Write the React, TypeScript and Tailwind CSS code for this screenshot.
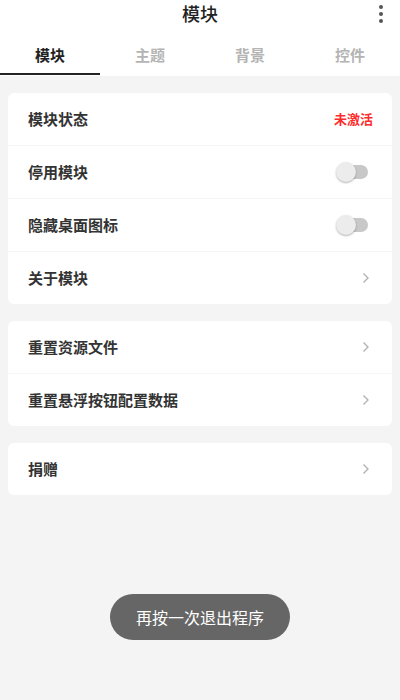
const font = { fontFamily: '"Noto Sans CJK SC", "Noto Sans", sans-serif' };

const Toggle = () => (
  <div className="relative w-[32px] h-[20px] flex items-center">
    <div className="absolute right-0 w-[24px] h-[14px] rounded-full bg-[#c8c8c8]" />
    <div className="absolute left-0 w-[20px] h-[20px] rounded-full bg-[#ececec] shadow-[0_1px_2px_rgba(0,0,0,0.3)]" />
  </div>
);

const Chevron = () => (
  <svg width="8" height="12" viewBox="0 0 8 12" fill="none" stroke="#b0b0b0" strokeWidth="1.3">
    <path d="M1.5 1.5 L6 6 L1.5 10.5" />
  </svg>
);

type Row = { label: string; right: "status" | "toggle" | "chevron" };

const Card = ({ rows }: { rows: Row[] }) => (
  <div className="mx-2 bg-white rounded-md overflow-hidden">
    {rows.map((r, i) => (
      <div
        key={r.label}
        className={`flex items-center justify-between pl-5 pr-6 ${i > 0 ? "h-[53px] border-t border-[#f6f6f6]" : "h-[52px]"}`}
      >
        <span className="text-[15px] font-semibold text-[#333]">{r.label}</span>
        {r.right === "status" && <span className="text-[13px] font-semibold text-[#ff2a2a] -mr-[5px]">未激活</span>}
        {r.right === "toggle" && <Toggle />}
        {r.right === "chevron" && <div className="-mr-[2px] flex"><Chevron /></div>}
      </div>
    ))}
  </div>
);

export default function App() {
  const tabs = ["模块", "主题", "背景", "控件"];
  return (
    <div className="w-[400px] h-[700px] bg-[#f4f4f4] relative overflow-hidden" style={font}>
      <div className="bg-white">
        <div className="h-[26px] relative flex items-center justify-center">
          <span className="text-[18px] text-[#222] font-medium">模块</span>
          <div className="absolute right-[17px] top-[5px] flex flex-col gap-[3px]">
            <div className="w-[4px] h-[4px] rounded-full bg-[#555]" />
            <div className="w-[4px] h-[4px] rounded-full bg-[#555]" />
            <div className="w-[4px] h-[4px] rounded-full bg-[#555]" />
          </div>
        </div>
        <div className="grid grid-cols-4 h-[50px]">
          {tabs.map((t, i) => (
            <div key={t} className="relative flex items-center justify-center pt-[8px]">
              <span className={`text-[15px] font-semibold ${i === 0 ? "text-[#222]" : "text-[#b4b4b4]"}`}>{t}</span>
              {i === 0 && <div className="absolute bottom-[1px] left-0 right-0 h-[2px] bg-[#222]" />}
            </div>
          ))}
        </div>
      </div>
      <div className="pt-[17px] flex flex-col gap-[17px]">
        <Card
          rows={[
            { label: "模块状态", right: "status" },
            { label: "停用模块", right: "toggle" },
            { label: "隐藏桌面图标", right: "toggle" },
            { label: "关于模块", right: "chevron" },
          ]}
        />
        <Card
          rows={[
            { label: "重置资源文件", right: "chevron" },
            { label: "重置悬浮按钮配置数据", right: "chevron" },
          ]}
        />
        <Card rows={[{ label: "捐赠", right: "chevron" }]} />
      </div>
      <div className="absolute left-1/2 -translate-x-1/2 top-[594px] h-[46px] px-[26px] rounded-full bg-[#666] flex items-center">
        <span className="text-[16px] text-white">再按一次退出程序</span>
      </div>
    </div>
  );
}
